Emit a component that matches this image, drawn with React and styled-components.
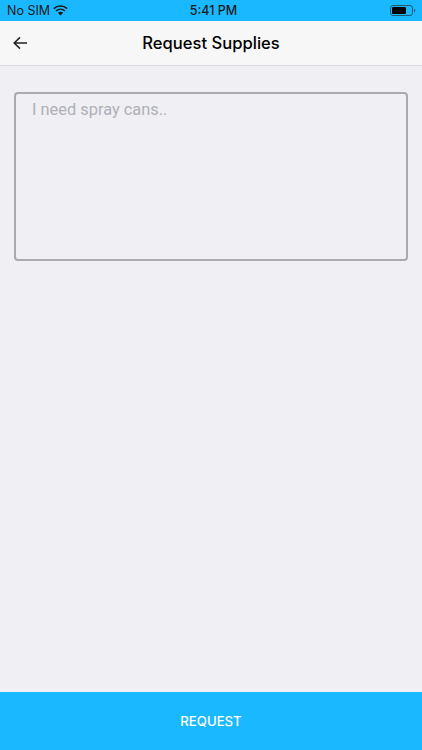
import React from "react"
import styled, { createGlobalStyle } from "styled-components"

const GlobalStyle = createGlobalStyle`
  html, body {
    margin: 0;
    padding: 0;
    height: 100%;
  }
  body {
    background: #efeff4;
    font-family: "Roboto", "Liberation Sans", sans-serif;
  }
  * {
    box-sizing: border-box;
  }
`

export default function App() {
  return (
    <Screen>
      <GlobalStyle />
      <StatusBar>
        <Carrier>
          No SIM
          <WifiIcon />
        </Carrier>
        <Clock>5:41 PM</Clock>
        <BatteryIcon />
      </StatusBar>
      <Header>
        <BackButton aria-label="Back">
          <ArrowIcon />
        </BackButton>
        <Title>Request Supplies</Title>
      </Header>
      <Body>
        <Field placeholder="I need spray cans.." />
      </Body>
      <SubmitButton>REQUEST</SubmitButton>
    </Screen>
  )
}

const WifiIcon = () => (
  <svg width="15" height="11" viewBox="0 0 15 11">
    <path
      d="M0.8 3.7 C4.6 0.1 10.4 0.1 14.2 3.7"
      fill="none"
      stroke="#1a1a1a"
      strokeWidth="1.6"
    />
    <path
      d="M3 6 C5.6 3.6 9.4 3.6 12 6"
      fill="none"
      stroke="#1a1a1a"
      strokeWidth="1.6"
    />
    <path d="M4.9 7.7 C6.4 6.4 8.6 6.4 10.1 7.7 L7.5 10.6 Z" fill="#1a1a1a" />
  </svg>
)

const BatteryIcon = () => (
  <BatteryWrap>
    <svg width="26" height="11" viewBox="0 0 26 11">
      <rect
        x="0.5"
        y="0.5"
        width="22"
        height="10"
        rx="2.5"
        fill="none"
        stroke="#1a1a1a"
        strokeOpacity="0.6"
      />
      <rect x="2" y="2" width="14" height="7" rx="1.2" fill="#000" />
      <path
        d="M24 3.8 C25 4 25.4 4.7 25.4 5.5 C25.4 6.3 25 7 24 7.2 Z"
        fill="#1a1a1a"
        fillOpacity="0.5"
      />
    </svg>
  </BatteryWrap>
)

const ArrowIcon = () => (
  <svg width="16" height="14" viewBox="0 0 16 14">
    <path
      d="M15 7 H2.5 M8 1.4 L2.2 7 L8 12.6"
      fill="none"
      stroke="#222"
      strokeWidth="1.5"
    />
  </svg>
)

const Screen = styled.div`
  display: flex;
  flex-direction: column;
  width: 422px;
  height: 750px;
  overflow: hidden;
  background: #efeff4;
`

const StatusBar = styled.div`
  display: grid;
  grid-template-columns: 1fr auto 1fr;
  align-items: center;
  height: 21px;
  padding: 0 6px 0 7px;
  background: #1ab9ff;
  color: #1a1a1a;
  font-family: "Inter", "Liberation Sans", sans-serif;
  font-size: 12.5px;
`

const Carrier = styled.div`
  display: flex;
  align-items: center;
  gap: 3px;
`

const Clock = styled.div`
  margin-left: 4px;
  font-weight: 500;
`

const BatteryWrap = styled.div`
  display: flex;
  justify-content: flex-end;
`

const Header = styled.header`
  position: relative;
  display: flex;
  align-items: center;
  justify-content: center;
  height: 45px;
  background: #f7f7f7;
  border-bottom: 1px solid #d9d9de;
`

const BackButton = styled.button`
  position: absolute;
  left: 12px;
  top: 15px;
  display: flex;
  padding: 0;
  border: 0;
  background: none;
`

const Title = styled.h1`
  margin: 0;
  font-family: "Inter", "Roboto", sans-serif;
  font-size: 16.6px;
  font-weight: 500;
  color: #000;
`

const Body = styled.main`
  flex: 1;
  padding: 26px 14px 0;
`

const Field = styled.textarea`
  display: block;
  width: 100%;
  height: 169px;
  padding: 4px 16px;
  resize: none;
  outline: none;
  background: transparent;
  border: 2px solid #a9a9ae;
  border-radius: 4px;
  font-family: "Roboto", sans-serif;
  font-size: 16.4px;
  line-height: 24px;
  color: #333;

  &::placeholder {
    color: #b0b0b5;
    opacity: 1;
  }
`

const SubmitButton = styled.button`
  flex: none;
  height: 58px;
  border: 0;
  background: #1ab9ff;
  color: #fff;
  font-family: "Inter", "Roboto", sans-serif;
  font-size: 13.2px;
  font-weight: 500;
`
